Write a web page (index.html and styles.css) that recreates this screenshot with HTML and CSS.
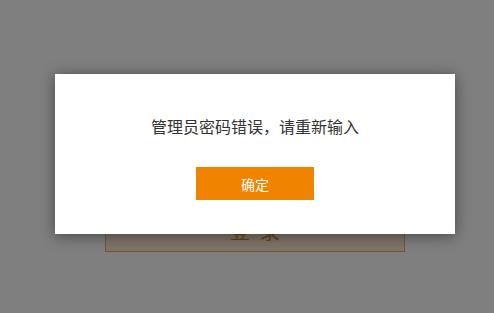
FILE: index.html
```html
<!DOCTYPE html>
<html lang="zh-CN">
<head>
<meta charset="utf-8">
<link rel="stylesheet" href="styles.css">
</head>
<body>
<div class="page">
  <div class="login-area">
    <button class="login-btn">登录</button>
  </div>
</div>
<div class="mask"></div>
<div class="dialog">
  <p class="msg">管理员密码错误，请重新输入</p>
  <button class="ok-btn">确定</button>
</div>
</body>
</html>
```
FILE: styles.css
```css
html, body {
  margin: 0;
  padding: 0;
  width: 494px;
  height: 313px;
  overflow: hidden;
  background: #ffffff;
  font-family: "Noto Sans CJK SC", "Microsoft YaHei", sans-serif;
}
.page {
  width: 494px;
  height: 313px;
  display: flex;
  flex-direction: column;
}
.login-area {
  padding-top: 211px;
  padding-left: 105px;
}
.login-btn {
  display: block;
  box-sizing: border-box;
  width: 300px;
  height: 41px;
  border: 1px solid #f6a55a;
  background: #fde9d2;
  color: #d9841c;
  font-size: 20px;
  font-family: "Noto Sans CJK SC", sans-serif;
  letter-spacing: 10px;
  padding: 0 0 2px 10px;
  line-height: 1;
}
.mask {
  position: absolute;
  left: 0;
  top: 0;
  width: 494px;
  height: 313px;
  background: rgba(0, 0, 0, 0.5);
}
.dialog {
  position: absolute;
  left: 55px;
  top: 74px;
  width: 400px;
  height: 160px;
  background: #ffffff;
  box-shadow: 0 2px 14px rgba(0, 0, 0, 0.45);
  display: flex;
  flex-direction: column;
  align-items: center;
}
.msg {
  margin: 42px 0 0 0;
  font-size: 16px;
  line-height: 20px;
  color: #333333;
  font-family: "Noto Sans CJK SC", sans-serif;
}
.ok-btn {
  margin-top: 31px;
  width: 118px;
  height: 33px;
  border: none;
  background: #f08300;
  color: #ffffff;
  font-size: 14px;
  font-family: "Noto Sans CJK SC", sans-serif;
  padding: 0;
}
```
